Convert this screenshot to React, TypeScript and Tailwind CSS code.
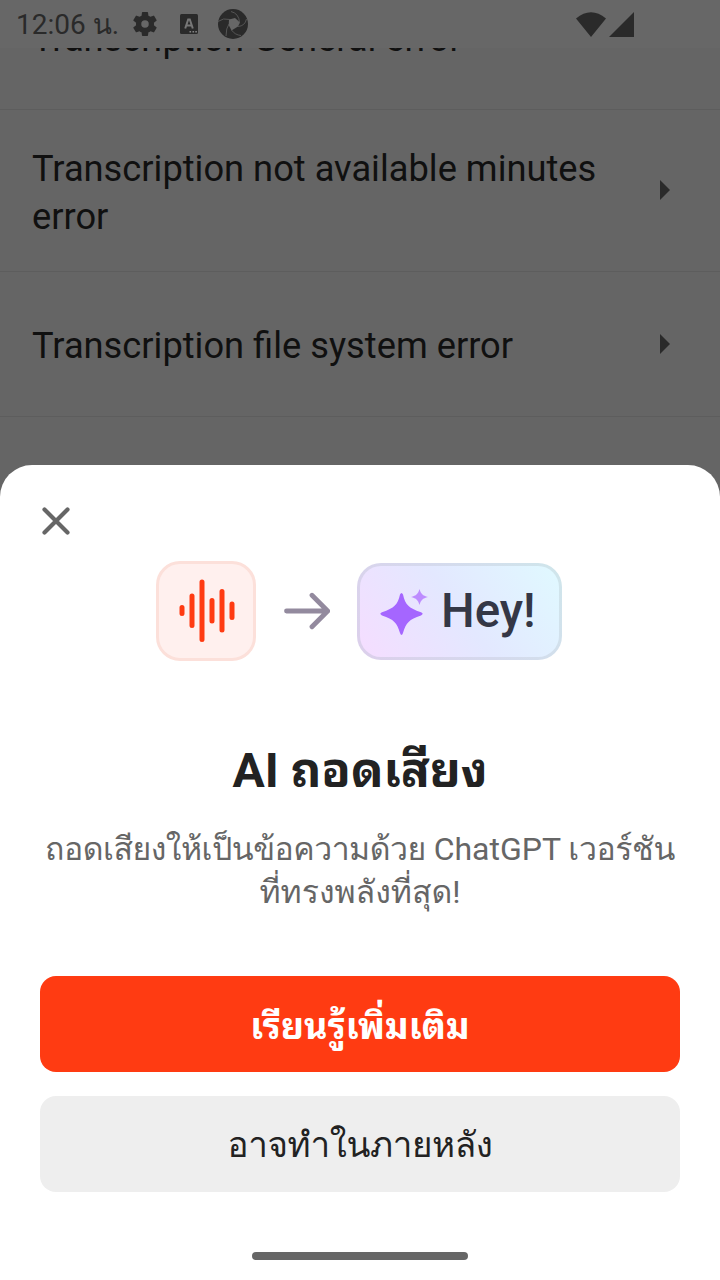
import React from "react";

function StatusBar() {
  return (
    <header className="flex h-12 shrink-0 items-center bg-[#676767] text-[#2a2a2a]">
      <span className="ml-4 w-[104px] whitespace-nowrap text-[28px] leading-[48px] pt-[2px]">12:06 น.</span>
      <svg className="ml-[10px] size-[30px]" viewBox="0 0 24 24" fill="currentColor">
        <path d="M19.14 12.94c.04-.3.06-.61.06-.94s-.02-.64-.07-.94l2.03-1.58a.49.49 0 0 0 .12-.61l-1.92-3.32a.49.49 0 0 0-.59-.22l-2.39.96a7 7 0 0 0-1.62-.94l-.36-2.54A.48.48 0 0 0 13.92 2.4h-3.84a.48.48 0 0 0-.48.41l-.36 2.54c-.59.24-1.13.57-1.62.94l-2.39-.96a.48.48 0 0 0-.59.22L2.72 8.87a.48.48 0 0 0 .12.61l2.03 1.58a6 6 0 0 0 0 1.88l-2.03 1.58a.49.49 0 0 0-.12.61l1.92 3.32c.12.22.37.29.59.22l2.39-.96c.5.38 1.03.7 1.62.94l.36 2.54c.05.24.24.41.48.41h3.84c.24 0 .44-.17.47-.41l.36-2.54a7 7 0 0 0 1.62-.94l2.39.96c.22.08.47 0 .59-.22l1.92-3.32a.48.48 0 0 0-.12-.61zM12 15a3 3 0 1 1 0-6 3 3 0 0 1 0 6z" />
      </svg>
      <svg className="ml-5 h-5 w-[18px]" viewBox="0 0 18 20">
        <rect width="18" height="20" rx="1.5" fill="currentColor" />
        <path d="M5.2 14.5 8.2 5.5h1.6l3 9M6.4 11.5h5.2" fill="none" stroke="#777" strokeWidth="2" />
        <path d="M9.5 17h1.6v1.5H9.5zM12.5 17h1.6v1.5h-1.6zM15.3 17h1.6v1.5h-1.6z" fill="#858585" />
      </svg>
      <svg className="ml-5 size-[30px]" viewBox="0 0 30 30">
        <circle cx="15" cy="15" r="15" fill="currentColor" />
        <path d="M11 10.5 17 9 22 13.5 20 17.5 13.5 21.5 10.7 16Z" fill="#676767" />
        <g fill="none" stroke="#5a5a5a" strokeWidth="0.9">
          <path d="M0 12.5Q5 8.5 12 10.5" />
          <path d="M13 2.5Q21 4.5 21.5 13.5" />
          <path d="M28.5 10Q27 17 20 17.5" />
          <path d="M23 26.5Q17 26 13.5 21" />
          <path d="M8 27Q8 19 11 15" />
        </g>
      </svg>
      <svg className="ml-[328px] h-[25px] w-[58px]" viewBox="0 0 58 25" fill="currentColor">
        <path d="M0 6.5Q15-6 30 6.5L15 25ZM33 25 58 0V25Z" />
      </svg>
    </header>
  );
}

function Row({ label, className, arrow }: { label: string; className: string; arrow: string }) {
  return (
    <div className={`flex shrink-0 items-center border-b border-[#5d5d5d] pl-8 pr-[50px] ${className}`}>
      <span className="w-[600px] pt-1 text-[36.25px] leading-[48px] text-[#101010]">{label}</span>
      <svg className={`ml-auto h-5 w-[10px] ${arrow}`} viewBox="0 0 10 20" fill="#2a2a2a">
        <path d="M0 0 10 10 0 20Z" />
      </svg>
    </div>
  );
}

function Illustration() {
  return (
    <div className="flex h-[100px] items-center pl-[156px]">
      <div className="flex size-[100px] items-center justify-center rounded-[24px] border-[3px] border-[#fce0da] bg-[#fff0ee]">
        <svg className="ml-px h-[64px] w-[56px]" viewBox="0 0 56 64" fill="none" stroke="#ff3b12" strokeWidth="5" strokeLinecap="round">
          <path d="M3 28.5V34.5M13 17V46.5M23 3V60.5M33 21.5V42M43 12.5V51M53 25V38.5" />
        </svg>
      </div>
      <svg className="ml-7 h-[38px] w-[46px]" viewBox="0 0 46 38" fill="none" stroke="#938a9e" strokeWidth="4.8" strokeLinecap="round" strokeLinejoin="round">
        <path d="M2.5 19H43.5M28 3.3 43.7 19 28 34.7" />
      </svg>
      <div className="ml-[27px] flex h-[97px] w-[205px] items-center rounded-[24px] bg-[linear-gradient(55deg,#dccfeb,#d5d9ed_50%,#cfe6eb)] p-[3px]">
        <div className="flex h-full w-full items-center rounded-[21px] bg-[linear-gradient(55deg,#f5ddff,#e3e8ff_50%,#e0f9ff)] pl-5">
          <svg className="mt-[3px] h-[48px] w-[48px]" viewBox="0 0 48 48">
            <path fill="#a566ff" d="M20 5.5Q21.5 2.5 23 5.5C25.3 15.5 28.5 19 41 23.2Q44.3 24.7 41 26.5C29 30.2 26 34 23 44Q21.5 48 20 44C17 34 14 30.2 2 26.5Q-1.3 24.7 2 23.2C14.5 19 17.7 15.5 20 5.5Z" />
            <path fill="#bd8cff" d="M39.5 0C41 5 42.5 6.5 48 8 42.5 9.5 41 11 39.5 16 38 11 36.5 9.5 31 8 36.5 6.5 38 5 39.5 0Z" />
          </svg>
          <span className="ml-[13px] text-[47.5px] font-medium leading-[56px] text-[#343746]">Hey!</span>
        </div>
      </div>
    </div>
  );
}

export default function App() {
  return (
    <main className="flex h-[1280px] w-[720px] flex-col overflow-hidden bg-[#656565] font-['Roboto','Loma',sans-serif]">
      <StatusBar />
      <section className="flex h-[417px] shrink-0 flex-col overflow-hidden">
        <div className="flex h-[62px] shrink-0 items-start border-b border-[#5d5d5d] pl-8">
          <span className="-mt-[33px] text-[36.25px] leading-[48px] text-[#101010]">Transcription General error</span>
        </div>
        <Row label="Transcription not available minutes error" className="h-[162px]" arrow="-translate-y-px" />
        <Row label="Transcription file system error" className="h-[145px]" arrow="" />
      </section>
      <section className="flex flex-1 flex-col rounded-t-[32px] bg-white">
        <button aria-label="Close" className="ml-[42px] mt-[42px] size-7">
          <svg className="size-7" viewBox="0 0 28 28" fill="none" stroke="#666" strokeWidth="4.2" strokeLinecap="round">
            <path d="M2.5 2.5 25.5 25.5M25.5 2.5 2.5 25.5" />
          </svg>
        </button>
        <div className="mt-[26px]"><Illustration /></div>
        <h1 className="mt-[82px] h-[56px] text-center font-['Roboto','Noto_Sans_Thai_Looped',sans-serif] text-[48px] font-bold leading-[56px] text-[#222]">AI ถอดเสียง</h1>
        <p className="mt-[29px] h-[86px] whitespace-nowrap text-center text-[32px] leading-[43px] text-[#666]">
          <span className="tracking-[-0.5px]">ถอดเสียงให้เป็นข้อความด้วย</span> ChatGPT <span className="tracking-[-0.4px]">เวอร์ชัน</span><br />ที่ทรงพลังที่สุด!
        </p>
        <div className="mx-10 mt-auto flex flex-col gap-6">
          <button className="h-24 rounded-2xl bg-[#ff3b12] pt-[5px] font-['Roboto','Noto_Sans_Thai_Looped',sans-serif] text-[36px] font-bold text-white">เรียนรู้เพิ่มเติม</button>
          <button className="h-24 rounded-2xl bg-[#eee] pt-[5px] text-[35px] tracking-[-0.4px] text-[#222]">อาจทำในภายหลัง</button>
        </div>
        <div className="mx-auto mb-5 mt-[60px] h-2 w-[216px] rounded-full bg-[#666]" />
      </section>
    </main>
  );
}
